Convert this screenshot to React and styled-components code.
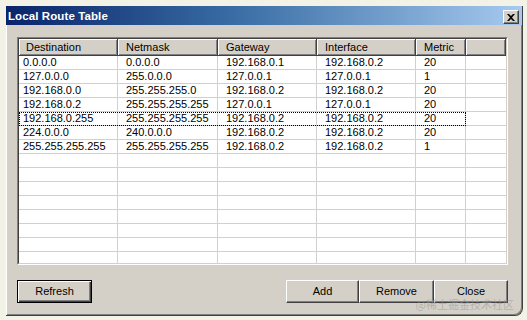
import React from "react";
import styled, { createGlobalStyle } from "styled-components";

const GlobalStyle = createGlobalStyle`
  * { box-sizing: border-box; }
  html, body {
    margin: 0;
    padding: 0;
    background: #f3f2e6;
    overflow: hidden;
  }
  body {
    font-family: "Liberation Sans", Arial, sans-serif;
    font-size: 11px;
  }
`;

const columns = [
  { key: "dest", title: "Destination", width: 99 },
  { key: "mask", title: "Netmask", width: 100 },
  { key: "gw", title: "Gateway", width: 99 },
  { key: "iface", title: "Interface", width: 99 },
  { key: "metric", title: "Metric", width: 50 },
];

const routes = [
  ["0.0.0.0", "0.0.0.0", "192.168.0.1", "192.168.0.2", "20"],
  ["127.0.0.0", "255.0.0.0", "127.0.0.1", "127.0.0.1", "1"],
  ["192.168.0.0", "255.255.255.0", "192.168.0.2", "192.168.0.2", "20"],
  ["192.168.0.2", "255.255.255.255", "127.0.0.1", "127.0.0.1", "20"],
  ["192.168.0.255", "255.255.255.255", "192.168.0.2", "192.168.0.2", "20"],
  ["224.0.0.0", "240.0.0.0", "192.168.0.2", "192.168.0.2", "20"],
  ["255.255.255.255", "255.255.255.255", "192.168.0.2", "192.168.0.2", "1"],
];

const FOCUSED = 4;
const TOTAL_ROWS = 15;

const Window = styled.div`
  position: relative;
  width: 517px;
  height: 310px;
  margin: 6px 0 0 6px;
  background: #d4d0c8;
  border-right: 1px solid #404040;
  border-bottom: 1px solid #404040;
  border-bottom-right-radius: 8px;
  box-shadow: inset 1px 0 #ffffff, inset -1px -1px #808080;
  display: flex;
  flex-direction: column;
  overflow: hidden;
`;

const TitleBar = styled.div`
  height: 19px;
  flex: none;
  background: linear-gradient(to right, #0a246a 0%, #3a6ea5 45%, #a6caf0 100%);
  display: flex;
  align-items: center;
  justify-content: space-between;
  padding: 0 3px 0 2px;
`;

const Title = styled.span`
  color: #ffffff;
  font-weight: bold;
  font-size: 11.5px;
  letter-spacing: 0.1px;
`;

const CloseBox = styled.div`
  width: 16px;
  height: 14px;
  margin-top: 3px;
  background: #d4d0c8;
  border-top: 1px solid #ffffff;
  border-left: 1px solid #ffffff;
  border-right: 1px solid #404040;
  border-bottom: 1px solid #404040;
  box-shadow: inset -1px -1px #808080;
  display: flex;
  align-items: center;
  justify-content: center;
`;

const Body = styled.div`
  flex: 1;
  padding: 12px 14px 0 11px;
  display: flex;
  flex-direction: column;
`;

const ListOuter = styled.div`
  height: 228px;
  border: 1px solid;
  border-color: #808080 #ffffff #ffffff #808080;
`;

const ListInner = styled.div`
  height: 100%;
  background: #ffffff;
  border: 1px solid;
  border-color: #404040 #d4d0c8 #d4d0c8 #404040;
  overflow: hidden;
`;

const HeaderRow = styled.div`
  display: flex;
  height: 17px;
`;

const HeaderCell = styled.div`
  flex: ${(p) => (p.$width ? `0 0 ${p.$width}px` : "1")};
  height: 17px;
  background: #d4d0c8;
  border-right: 1px solid #404040;
  border-bottom: 1px solid #404040;
  box-shadow: inset 1px 1px #ffffff, inset -1px -1px #808080;
  padding-left: ${(p) => (p.$first ? 7 : 8)}px;
  line-height: 16px;
  color: #000;
  white-space: nowrap;
  overflow: hidden;
`;

const Row = styled.div`
  display: flex;
  height: 14px;
`;

const Item = styled.div`
  display: flex;
  outline: ${(p) => (p.$focused ? "1px dotted #000" : "none")};
  outline-offset: -1px;
`;

const Cell = styled.div`
  flex: ${(p) => (p.$width ? `0 0 ${p.$width}px` : "1")};
  width: ${(p) => (p.$width ? `${p.$width}px` : "auto")};
  height: 14px;
  border-right: 1px solid #d0d0d0;
  border-bottom: 1px solid #d0d0d0;
  padding-left: ${(p) => (p.$first ? 4 : 8)}px;
  line-height: 13px;
  color: #000;
  white-space: nowrap;
  overflow: hidden;
`;

const Filler = styled.div`
  flex: 1;
  height: 14px;
  border-bottom: 1px solid #d0d0d0;
`;

const Footer = styled.div`
  margin-top: 15px;
  display: flex;
  justify-content: space-between;
`;

const Group = styled.div`
  display: flex;
`;

const Button = styled.button`
  width: ${(p) => p.$width || 74}px;
  height: 23px;
  padding: 0;
  font-family: "Liberation Sans", Arial, sans-serif;
  font-size: 11px;
  line-height: 13px;
  color: #000;
  background: #d4d0c8;
  border: 1px solid;
  border-color: ${(p) =>
    p.$default ? "#000000" : "#ffffff #404040 #404040 #ffffff"};
  box-shadow: ${(p) =>
    p.$default
      ? "inset 1px 1px #ffffff, inset -1px -1px #404040, inset -2px -2px #808080"
      : "inset -1px -1px #808080"};
  cursor: pointer;
`;

const Watermark = styled.span`
  position: absolute;
  right: 8px;
  bottom: 5px;
  font-family: "Noto Sans CJK SC", sans-serif;
  font-size: 11px;
  line-height: 11px;
  color: rgba(150, 150, 150, 0.55);
  pointer-events: none;
`;

function CloseGlyph() {
  return (
    <svg width="8" height="7" viewBox="0 0 8 7">
      <path
        d="M0 0h2l2 2 2-2h2L5 3.5 8 7H6L4 5 2 7H0l3-3.5z"
        fill="#000"
      />
    </svg>
  );
}

export default function App() {
  const rows = Array.from({ length: TOTAL_ROWS }, (_, i) => routes[i] || null);

  return (
    <>
      <GlobalStyle />
      <Window>
        <TitleBar>
          <Title>Local Route Table</Title>
          <CloseBox>
            <CloseGlyph />
          </CloseBox>
        </TitleBar>
        <Body>
          <ListOuter>
            <ListInner>
              <HeaderRow>
                {columns.map((c, i) => (
                  <HeaderCell key={c.key} $width={c.width} $first={i === 0}>
                    {c.title}
                  </HeaderCell>
                ))}
                <HeaderCell />
              </HeaderRow>
              {rows.map((r, ri) => (
                <Row key={ri}>
                  <Item $focused={ri === FOCUSED}>
                    {columns.map((c, ci) => (
                      <Cell key={c.key} $width={c.width} $first={ci === 0}>
                        {r ? r[ci] : ""}
                      </Cell>
                    ))}
                  </Item>
                  <Filler />
                </Row>
              ))}
            </ListInner>
          </ListOuter>
          <Footer>
            <Button $default $width={75}>Refresh</Button>
            <Group>
              <Button $width={73}>Add</Button>
              <Button $width={75}>Remove</Button>
              <Button $width={74}>Close</Button>
            </Group>
          </Footer>
        </Body>
        <Watermark>@稀土掘金技术社区</Watermark>
      </Window>
    </>
  );
}
